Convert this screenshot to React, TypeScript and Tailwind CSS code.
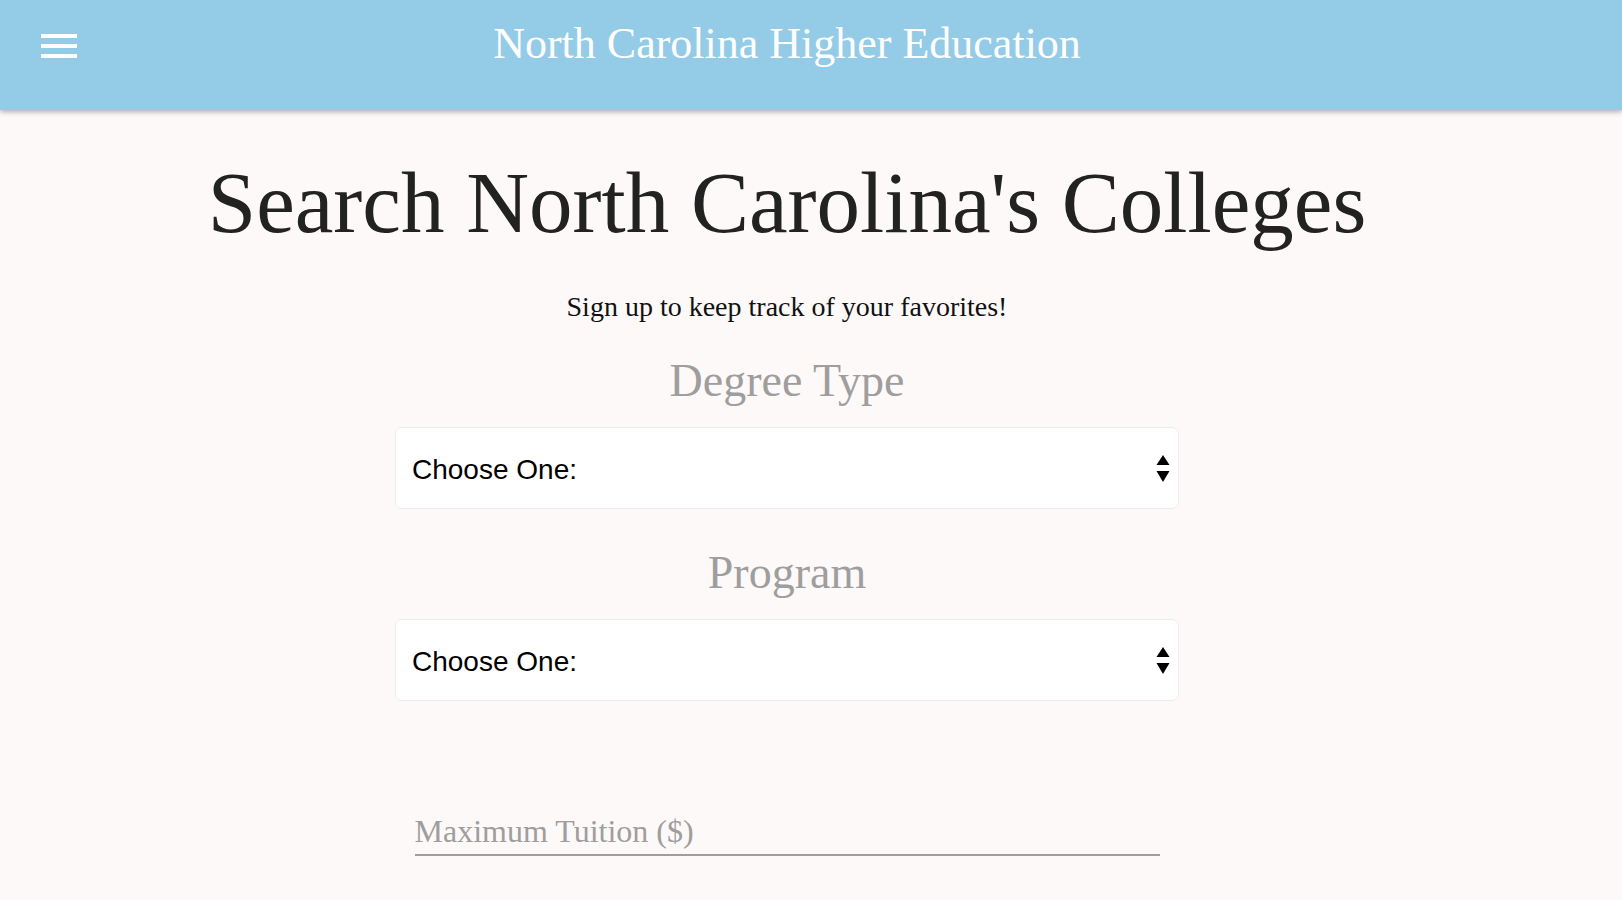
const serif = { fontFamily: '"Liberation Serif", "Times New Roman", serif' };

function Arrows() {
  return (
    <svg width="14" height="27" viewBox="0 0 14 27" className="shrink-0">
      <path d="M7 0 L13.5 10 L0.5 10 Z" fill="#000" />
      <path d="M0.5 16 L13.5 16 L7 27 Z" fill="#000" />
    </svg>
  );
}

function SelectBox() {
  return (
    <div className="mt-[23px] flex h-[82px] w-[784px] items-center justify-between rounded-[7px] border border-[#ececec] bg-white pl-[16px] pr-[8px]">
      <span className="pt-[4px] text-[28px] text-black" style={{ fontFamily: '"Liberation Sans", Arial, sans-serif' }}>
        Choose One:
      </span>
      <Arrows />
    </div>
  );
}

export default function App() {
  return (
    <div className="min-h-screen w-full bg-[#fdf9f8]" style={serif}>
      <header className="relative z-10 grid h-[110px] grid-cols-[120px_1fr_168px] bg-[#94cce8] shadow-[0_2px_5px_rgba(0,0,0,0.3)]">
        <div className="flex flex-col gap-[6px] pl-[41px] pt-[34px]">
          <span className="block h-[4px] w-[36px] bg-white" />
          <span className="block h-[4px] w-[36px] bg-white" />
          <span className="block h-[4px] w-[36px] bg-white" />
        </div>
        <div className="pt-[22px] text-center text-[44px] leading-none text-white">North Carolina Higher Education</div>
        <div />
      </header>

      <main className="flex w-[1574px] flex-col items-center">
        <h1 className="mt-[49px] text-[87px] leading-none font-normal text-[#222]">Search North Carolina's Colleges</h1>
        <p className="mt-[47px] text-[28px] leading-none text-[#111]">Sign up to keep track of your favorites!</p>

        <h2 className="mt-[37px] text-[46px] leading-none text-[#9e9e9e]">Degree Type</h2>
        <SelectBox />

        <h2 className="mt-[41px] text-[46px] leading-none text-[#9e9e9e]">Program</h2>
        <SelectBox />

        <div className="mt-[114px] w-[745px] border-b-2 border-[#9e9e9e] pb-[5px]">
          <span className="text-[32px] leading-none text-[#9e9e9e]">Maximum Tuition ($)</span>
        </div>
      </main>
    </div>
  );
}
